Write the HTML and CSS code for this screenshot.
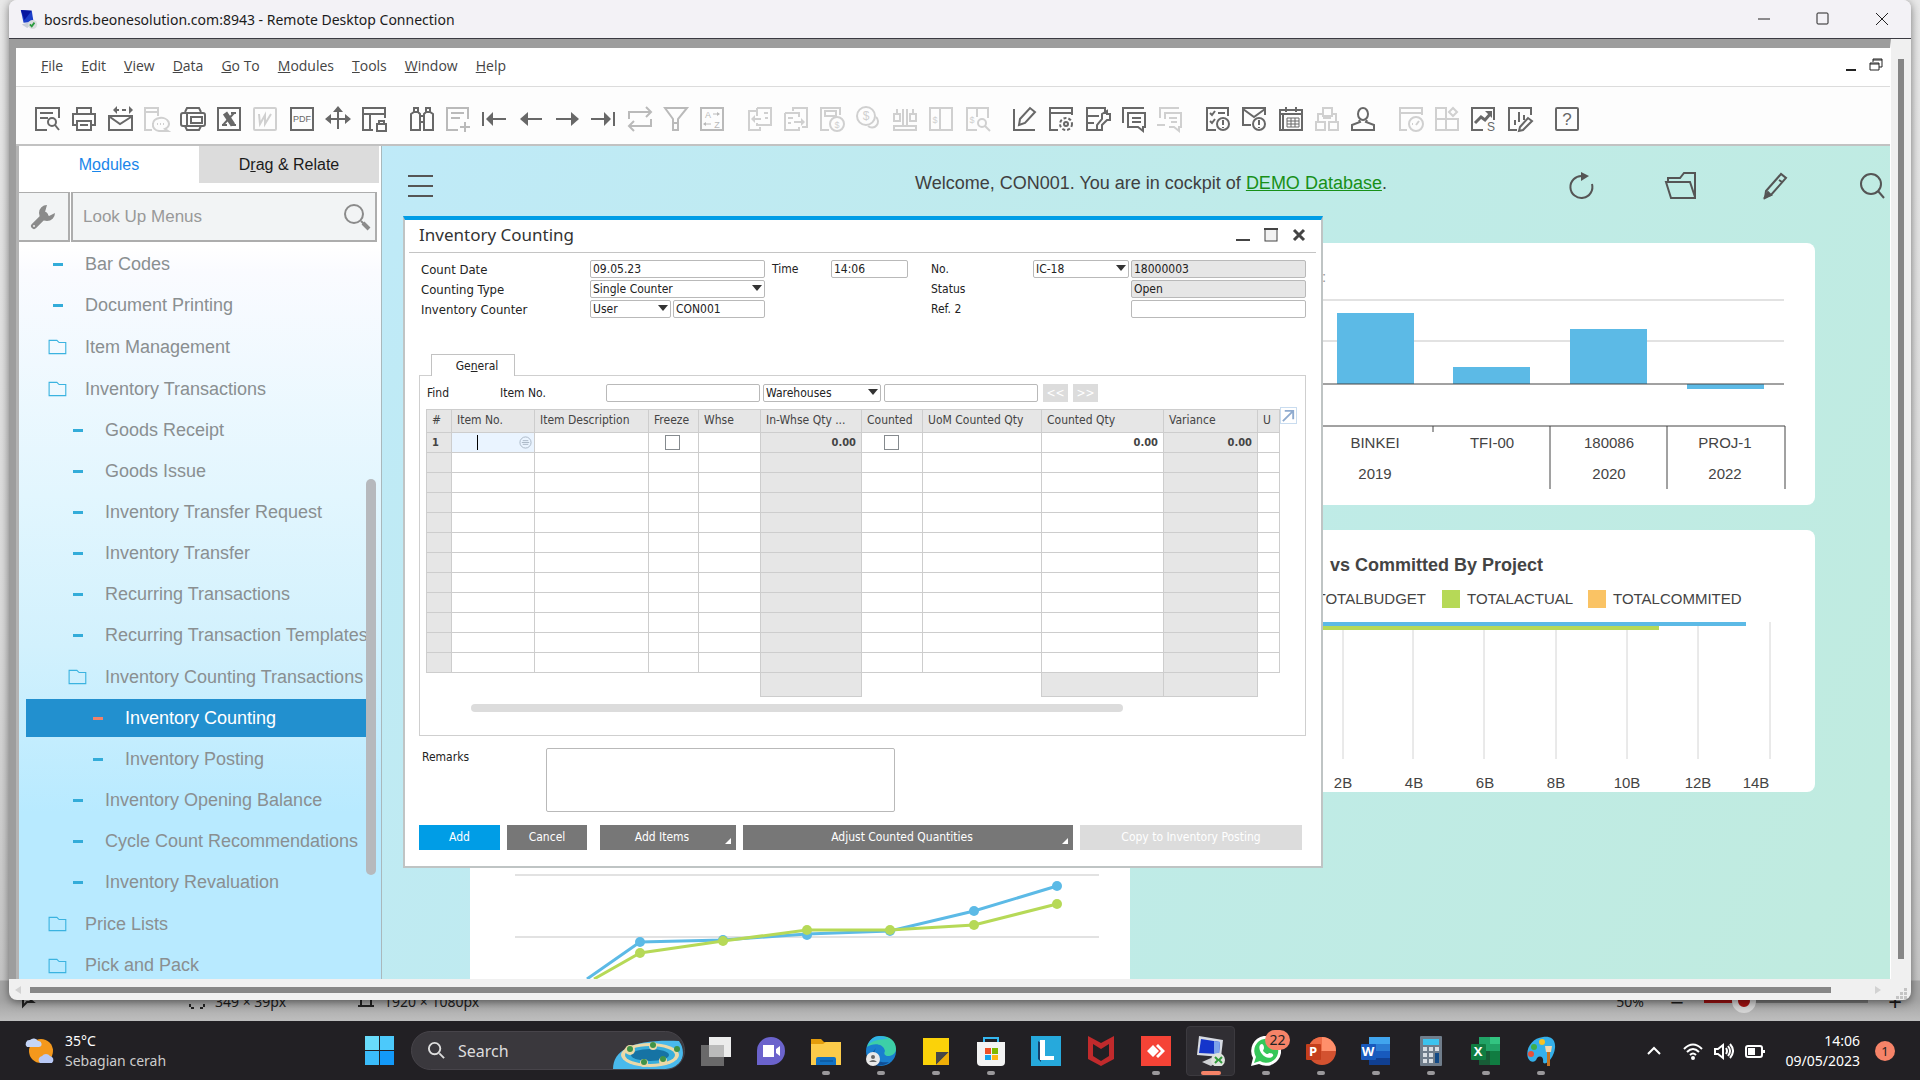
FILE: index.html
```html
<!DOCTYPE html>
<html lang="en">
<head>
  <meta charset="utf-8">
  <meta name="viewport" content="width=device-width, initial-scale=1">
  <title>Inventory Counting - Remote Desktop Connection</title>
  <link rel="stylesheet" href="styles.css">
</head>
<body>
  <!-- App behind the remote session -->
  <div class="paint">
    <footer class="paint-status">
      <svg class="st-icon st-pointer" viewBox="0 0 16 16"><path d="M3 1v12l4-4h6z"/></svg>
      <svg class="st-icon" viewBox="0 0 16 16"><path d="M1 5V1h4M11 1h4v4M15 11v4h-4M5 15H1v-4" stroke-dasharray="3 2"/></svg>
      <span class="st-selection">349 × 39px</span>
      <svg class="st-icon" viewBox="0 0 16 16"><path d="M3 0v13M0 13h16M13 0v13M0 3h16"/></svg>
      <span>1920 × 1080px</span>
      <span class="st-zoom">50%</span>
      <span class="st-sign">−</span>
      <input class="st-slider" type="range" min="0" max="100" value="20" aria-label="Zoom">
      <span class="st-sign">+</span>
    </footer>
  </div>

  <div class="rdp">
    <header class="titlebar">
      <svg class="app-icon" viewBox="0 0 20 22"><path d="M1 1l12 1 2 12-11 1z" fill="#1c3fc9"/><path d="M1 1l12 1-8 10z" fill="#0717a0"/><path d="M2 17l6-2 5 2-5 4z" fill="#c8ced8"/><circle cx="14" cy="17" r="5" fill="#d9dcdd"/><path d="M11 17l2 2 3-4" stroke="#2c9b3f" stroke-width="2" fill="none"/></svg>
      <span class="title-text">bosrds.beonesolution.com:8943 - Remote Desktop Connection</span>
      <div class="title-buttons">
        <button aria-label="Minimize"><svg viewBox="0 0 14 14"><path d="M1 7h12"/></svg></button>
        <button aria-label="Maximize"><svg viewBox="0 0 14 14"><rect x="1" y="1" width="11" height="11" rx="1"/></svg></button>
        <button aria-label="Close"><svg viewBox="0 0 14 14"><path d="M1 1l12 12M13 1L1 13"/></svg></button>
      </div>
    </header>

    <div class="rdp-body">
      <div class="rdp-view">
        <nav class="menubar">
          <button><u>F</u>ile</button>
          <button><u>E</u>dit</button>
          <button><u>V</u>iew</button>
          <button><u>D</u>ata</button>
          <button><u>G</u>o To</button>
          <button><u>M</u>odules</button>
          <button><u>T</u>ools</button>
          <button><u>W</u>indow</button>
          <button><u>H</u>elp</button>
          <div class="mdi-buttons">
            <svg viewBox="0 0 14 14"><path d="M2 12h10" stroke-width="2"/></svg>
            <svg viewBox="0 0 14 14"><path d="M4 4V1h9v8h-3M1 5h9v7H1zM1 6h9M4 2h9"/></svg>
          </div>
        </nav>

        <div class="toolbar">
          <div class="tool-group">
            <button aria-label="Preview"><svg viewBox="0 0 26 26"><path d="M25 12V2H2v22h11M6 7h13M6 12h8"/><circle cx="18" cy="16" r="4"/><path d="M21 19l4 5"/></svg></button>
            <button aria-label="Print"><svg viewBox="0 0 26 26"><path d="M6 8V2h14v6M6 19H2V8h22v11h-4M6 15h14v9H6zM9 19h8"/></svg></button>
            <button aria-label="Send message"><svg viewBox="0 0 26 26"><rect x="2" y="10" width="23" height="14"/><path d="M3 11l10 7 11-7M8 4h4M15 4h4"/><path class="solid" d="M6 4l4-4v8zM26 4l-4-4v8z"/></svg></button>
            <button aria-label="Send SMS" disabled><svg viewBox="0 0 26 26"><path d="M9 24H2V2h13v8M2 6h13"/><path d="M10 18a8 6 0 1 1 12 5l3 2h-9a7 6 0 0 1-6-7M14 18h1M17 18h1M20 18h1"/></svg></button>
            <button aria-label="Fax"><svg viewBox="0 0 26 26"><path d="M5 6l2-4h12l2 4M5 20l2 4h12l2-4"/><rect x="1" y="7" width="24" height="13" rx="2"/><path d="M7 7v13M11 11h11v6H11z"/></svg></button>
            <button aria-label="Export to Excel"><svg viewBox="0 0 26 26"><rect x="2" y="2" width="22" height="22"/><path d="M9 7l8 12" stroke-width="5"/><path d="M18 7L7 19" stroke-width="2"/><path d="M6 19h5M15 7h5M15 19h5"/></svg></button>
            <button aria-label="Export to Word" disabled><svg viewBox="0 0 26 26"><rect x="2" y="2" width="22" height="22" rx="1"/><path d="M7 8l1 10 5-9v9l6-10" stroke-width="2"/></svg></button>
            <button aria-label="Export to PDF"><svg viewBox="0 0 26 26"><rect x="2" y="2" width="22" height="22"/><text x="13" y="16">PDF</text></svg></button>
            <button aria-label="Launch application"><svg viewBox="0 0 26 26"><path d="M13 3v20M3 13h20"/><path class="solid" d="M13 0l5 6H8zM0 13l6-5v10zM26 13l-6-5v10z"/></svg></button>
            <button aria-label="Lock screen"><svg viewBox="0 0 26 26"><path d="M24 12V2H2v22h10M2 8h22M9 8v16"/><rect x="16" y="18" width="9" height="7"/><path d="M18 18v-3h5v3"/></svg></button>
          </div>
          <div class="tool-group">
            <button aria-label="Find"><svg viewBox="0 0 26 26"><path d="M2 8l3-2h4l2 2v16H2zM15 8l2-2h4l3 2v16h-9zM5 6V2h4v4M17 6V2h4v4M11 10h4M11 16h4"/></svg></button>
            <button aria-label="Add" class="mid"><svg viewBox="0 0 26 26"><path d="M23 13V2H2v22h11M6 7h13M6 12h9M20 16v10M15 21h10"/></svg></button>
            <button aria-label="First record"><svg viewBox="0 0 26 26"><path d="M2 6v14M7 13h18"/><path class="solid" d="M5 13l7-7v14z"/></svg></button>
            <button aria-label="Previous record"><svg viewBox="0 0 26 26"><path d="M5 13h19"/><path class="solid" d="M2 13l8-7v14z"/></svg></button>
            <button aria-label="Next record"><svg viewBox="0 0 26 26"><path d="M2 13h19"/><path class="solid" d="M25 13l-8-7v14z"/></svg></button>
            <button aria-label="Last record"><svg viewBox="0 0 26 26"><path d="M24 6v14M1 13h18"/><path class="solid" d="M21 13l-7-7v14z"/></svg></button>
            <button aria-label="Refresh record" class="mid"><svg viewBox="0 0 26 26"><path d="M2 13V6h22M19 1l5 5-5 5M24 13v7H2M7 15l-5 5 5 5"/></svg></button>
            <button aria-label="Filter" class="mid"><svg viewBox="0 0 26 26"><path d="M2 2h22l-9 11v11h-5V13zM10 17h5"/></svg></button>
            <button aria-label="Sort" class="mid"><svg viewBox="0 0 26 26"><rect x="2" y="2" width="22" height="22"/><text x="9" y="12">A</text><text x="18" y="22">Z</text><path d="M14 8h6M12 18H5" stroke-width="1"/><path class="solid" d="M21 8l-3-2v4zM4 18l3-2v4z"/></svg></button>
          </div>
          <div class="tool-group">
            <button aria-label="Base document" disabled><svg viewBox="0 0 26 26"><path d="M9 5H2v19h11v-3M10 2h14v17H10v-2M10 10V2M5 13h9M17 7h4M18 12h3"/><path class="solid" d="M4 13l4-4v8z"/></svg></button>
            <button aria-label="Target document" disabled><svg viewBox="0 0 26 26"><path d="M10 5V2h14v19h-5M2 7h14v4M2 7v17h14v-3M5 12h5M5 17h3M11 16h9"/><path class="solid" d="M22 16l-4-4v8z"/></svg></button>
            <button aria-label="Gross profit" disabled><svg viewBox="0 0 26 26"><path d="M21 9V2H2v22h8M6 5h11v5H6z"/><circle cx="18" cy="18" r="7"/><text x="18" y="22">$</text></svg></button>
            <button aria-label="Payment means" disabled><svg viewBox="0 0 26 26"><circle cx="10" cy="10" r="9"/><path d="M20 11a6 6 0 1 1-8 9"/><text x="10" y="14" class="big">$</text></svg></button>
            <button aria-label="Volume and weight" disabled><svg viewBox="0 0 26 26"><path d="M11 3v17M15 3v17M5 3v5M21 3v5M2 8h6v7H2zM18 8h6v7h-6zM2 20h22v4H2z"/></svg></button>
            <button aria-label="Transaction journal" disabled><svg viewBox="0 0 26 26"><rect x="2" y="2" width="22" height="22"/><path d="M12 2v22"/><text x="7" y="17">$</text></svg></button>
            <button aria-label="Journal preview" disabled><svg viewBox="0 0 26 26"><path d="M23 12V2H2v22h10M12 2v9"/><text x="7" y="17">$</text><circle cx="17" cy="17" r="4"/><path d="M20 20l5 5"/></svg></button>
          </div>
          <div class="tool-group">
            <button aria-label="Layout designer"><svg viewBox="0 0 26 26"><path d="M2 3v21h21"/><path d="M8 13l10-11 5 4-10 11-6 2z" stroke-width="2"/></svg></button>
            <button aria-label="Form settings"><svg viewBox="0 0 26 26"><path d="M24 9V2H2v22h8M2 7h22"/><circle cx="18" cy="18" r="2"/><circle cx="18" cy="18" r="6" stroke-dasharray="3 2"/></svg></button>
            <button aria-label="Query manager"><svg viewBox="0 0 26 26"><path d="M20 8V2H2v22h9M2 10h12M2 17h7"/><path d="M25 8h-3V5l-5 3v5l-5 6v5h5v-5l5-5h3z" stroke-width="2"/></svg></button>
            <button aria-label="Messages"><svg viewBox="0 0 26 26"><path d="M2 17V2h21"/><path d="M7 7h17v14h-2v4l-5-4H7zM11 12h9M11 16h9"/></svg></button>
            <button aria-label="Forward" disabled><svg viewBox="0 0 26 26"><path d="M3 12V2h19M8 13V7h16v14h-2v4l-5-4h-5M12 12h8M14 16h6M0 19h8"/></svg></button>
          </div>
          <div class="tool-group">
            <button aria-label="My activities"><svg viewBox="0 0 26 26"><path d="M23 10V2H2v22h9M5 7l2 2 3-4M5 15l2 2 3-4M13 7h7"/><circle cx="18" cy="18" r="6"/><path d="M18 14v5M18 21v1"/></svg></button>
            <button aria-label="Alerts"><svg viewBox="0 0 26 26"><path d="M24 9V2H2v17h8M2 3l11 8 11-8"/><circle cx="18" cy="18" r="6"/><path d="M18 14v5M18 21v1"/></svg></button>
            <button aria-label="Calendar"><svg viewBox="0 0 26 26"><path d="M2 4h22v20H2zM2 8h22M8 1v5M18 1v5M5 8v16"/><path d="M9 12h12v9H9zM9 15h12M9 18h12M13 12v9M17 12v9" stroke-width="1"/></svg></button>
            <button aria-label="Organization" disabled><svg viewBox="0 0 26 26"><path d="M9 2h9v8H9zM2 16h9v8H2zM15 16h9v8h-9zM4 15V8h4M22 15V8h-3M9 12h8"/></svg></button>
            <button aria-label="Customer"><svg viewBox="0 0 26 26"><ellipse cx="13" cy="8" rx="5" ry="6"/><path d="M9 14l1 2-8 3v5h22v-5l-8-3 1-2"/></svg></button>
          </div>
          <div class="tool-group">
            <button aria-label="Dashboard" disabled><svg viewBox="0 0 26 26"><path d="M24 9V2H2v22h7M2 7h22"/><circle cx="18" cy="18" r="7"/><path d="M18 19l3-4M14 18h1"/></svg></button>
            <button aria-label="Widgets" disabled><svg viewBox="0 0 26 26"><path d="M2 2h10v22H2zM2 13h22v11H12M19 2l4 4-4 4-4-4z"/></svg></button>
            <button aria-label="Sales analysis"><svg viewBox="0 0 26 26"><path d="M24 14V2H2v22h11"/><path d="M5 17l6-6 4 3 6-7" stroke-width="3"/><path class="solid" d="M15 5h7v7z"/><text x="21" y="25" class="big">S</text></svg></button>
            <button aria-label="Edit report"><svg viewBox="0 0 26 26"><path d="M24 9V2H2v22h8M8 14v5M12 6v10M17 9v5"/><path d="M13 21l8-9 4 3-9 9-4 1z" stroke-width="2"/></svg></button>
          </div>
          <div class="tool-group">
            <button aria-label="Help"><svg viewBox="0 0 26 26"><rect x="2" y="2" width="22" height="22" rx="1"/><text x="13" y="19" class="help">?</text></svg></button>
          </div>
        </div>

        <div class="workspace">
          <aside class="sidebar">
            <div class="side-tabs">
              <button class="side-tab active">M<u>o</u>dules</button>
              <button class="side-tab">D<u>r</u>ag &amp; Relate</button>
            </div>
            <div class="lookup">
              <button class="wrench" aria-label="Settings"><svg viewBox="0 0 26 26"><path d="M4 22L15 11" stroke="#8b8b8b" stroke-width="6" stroke-linecap="round"/><path d="M17 1a8 8 0 1 0 8 8l-6 3-4-4z" fill="#8b8b8b"/><circle cx="4" cy="22" r="1" fill="#eee"/></svg></button>
              <div class="lookup-box">
                <input type="text" placeholder="Look Up Menus" aria-label="Look up menus">
                <svg viewBox="0 0 28 28"><circle cx="11" cy="11" r="9" stroke-width="2"/><path d="M18 18l3 3" stroke-width="2"/><path d="M20 20l6 6" stroke-width="4"/></svg>
              </div>
            </div>
            <div class="tree-wrap">
              <ul class="tree">
                <li><a href="#"><i class="dash"></i>Bar Codes</a></li>
                <li><a href="#"><i class="dash"></i>Document Printing</a></li>
                <li class="folder"><a href="#"><svg viewBox="0 0 18 14"><path d="M1 1h7l2 2h6v10H1z"/></svg>Item Management</a></li>
                <li class="folder"><a href="#"><svg viewBox="0 0 18 14"><path d="M1 1h7l2 2h6v10H1z"/></svg>Inventory Transactions</a></li>
                <li class="lvl2"><a href="#"><i class="dash"></i>Goods Receipt</a></li>
                <li class="lvl2"><a href="#"><i class="dash"></i>Goods Issue</a></li>
                <li class="lvl2"><a href="#"><i class="dash"></i>Inventory Transfer Request</a></li>
                <li class="lvl2"><a href="#"><i class="dash"></i>Inventory Transfer</a></li>
                <li class="lvl2"><a href="#"><i class="dash"></i>Recurring Transactions</a></li>
                <li class="lvl2"><a href="#"><i class="dash"></i>Recurring Transaction Templates</a></li>
                <li class="lvl2 folder"><a href="#"><svg viewBox="0 0 18 14"><path d="M1 1h7l2 2h6v10H1z"/></svg>Inventory Counting Transactions</a></li>
                <li class="lvl3 selected"><a href="#"><i class="dash"></i>Inventory Counting</a></li>
                <li class="lvl3"><a href="#"><i class="dash"></i>Inventory Posting</a></li>
                <li class="lvl2"><a href="#"><i class="dash"></i>Inventory Opening Balance</a></li>
                <li class="lvl2"><a href="#"><i class="dash"></i>Cycle Count Recommendations</a></li>
                <li class="lvl2"><a href="#"><i class="dash"></i>Inventory Revaluation</a></li>
                <li class="folder"><a href="#"><svg viewBox="0 0 18 14"><path d="M1 1h7l2 2h6v10H1z"/></svg>Price Lists</a></li>
                <li><a href="#"><svg viewBox="0 0 18 14"><path d="M1 1h7l2 2h6v10H1z"/></svg>Pick and Pack</a></li>
              </ul>
              <div class="tree-scroll"><div class="tree-thumb"></div></div>
            </div>
          </aside>

          <main class="cockpit">
            <header class="cockpit-head">
              <button aria-label="Menu"><svg viewBox="0 0 28 28"><path d="M0 4h25M0 14h25M0 24h25"/></svg></button>
              <p>Welcome, CON001. You are in cockpit of <a href="#">DEMO Database</a>.</p>
              <div class="cockpit-actions">
                <button aria-label="Refresh"><svg viewBox="0 0 28 28"><path d="M12 4a11 11 0 1 0 10 8"/><path d="M11 0l8 4-8 5z" fill="#555" stroke="none"/></svg></button>
                <button aria-label="Open"><svg viewBox="0 0 28 28"><path d="M2 9V6h12l4-5h11v25H5L0 10h24l5 15"/></svg></button>
                <button aria-label="Edit"><svg viewBox="0 0 28 28"><path d="M4 19L19 2l5 4L9 23l-6 3z"/><path d="M17 8l3 2M3 25l3-5 3 3z" fill="#555"/></svg></button>
                <button aria-label="Search"><svg viewBox="0 0 28 28"><circle cx="13" cy="12" r="10"/><path d="M20 19l6 7"/></svg></button>
              </div>
            </header>

            <div class="cards">
              <section class="card card-empty"></section>
              <section class="card">
                <svg class="chart" viewBox="0 0 660 262">
                  <text x="167" y="39" class="faint">:</text>
                  <path class="grid" d="M30 57h599M30 98h599"/>
                  <g class="bars">
                    <rect x="182" y="70" width="77" height="71"/>
                    <rect x="298" y="124" width="77" height="17"/>
                    <rect x="415" y="86" width="77" height="55"/>
                    <rect x="532" y="141" width="77" height="5"/>
                  </g>
                  <path class="axis" d="M30 141h599"/>
                  <path class="axis" d="M30 183h600v63M278 183v6M395 183v63M512 183v63"/>
                  <g class="mid-text">
                    <text x="220" y="205">BINKEI</text><text x="337" y="205">TFI-00</text>
                    <text x="454" y="205">180086</text><text x="570" y="205">PROJ-1</text>
                    <text x="220" y="236">2019</text><text x="454" y="236">2020</text><text x="570" y="236">2022</text>
                  </g>
                </svg>
              </section>
              <section class="card card-line">
                <svg class="chart" viewBox="0 0 660 449">
                  <path class="grid" d="M45 345h584M45 407h584"/>
                  <g class="line-a">
                    <path d="M117 449l53-37 83-2 84-6 83-3 84-20 83-25" />
                    <circle cx="170" cy="412" r="5"/><circle cx="253" cy="410" r="5"/><circle cx="337" cy="405" r="5"/><circle cx="420" cy="401" r="5"/><circle cx="504" cy="381" r="5"/><circle cx="587" cy="356" r="5"/>
                  </g>
                  <g class="line-b">
                    <path d="M124 449l46-26 83-12 84-11h83l84-5 83-21" />
                    <circle cx="170" cy="423" r="5"/><circle cx="253" cy="411" r="5"/><circle cx="337" cy="400" r="5"/><circle cx="420" cy="400" r="5"/><circle cx="504" cy="395" r="5"/><circle cx="587" cy="374" r="5"/>
                  </g>
                </svg>
              </section>
              <section class="card">
                <svg class="chart" viewBox="0 0 660 262">
                  <text x="388" y="41" class="chart-title">vs Committed By Project</text>
                  <text x="271" y="74" class="end-text">TOTALBUDGET</text>
                  <rect x="287" y="60" width="18" height="18" fill="#b6d957"/>
                  <text x="312" y="74">TOTALACTUAL</text>
                  <rect x="433" y="60" width="18" height="18" fill="#fac364"/>
                  <text x="458" y="74">TOTALCOMMITED</text>
                  <path class="grid thin" d="M188 92v137M258 92v137M329 92v137M401 92v137M472 92v137M543 92v137M615 92v137"/>
                  <path d="M60 94h531" stroke="#5cbae6" stroke-width="4"/>
                  <path d="M60 98h444" stroke="#b6d957" stroke-width="4"/>
                  <g class="mid-text">
                    <text x="188" y="258">2B</text><text x="259" y="258">4B</text><text x="330" y="258">6B</text><text x="401" y="258">8B</text>
                    <text x="472" y="258">10B</text><text x="543" y="258">12B</text><text x="601" y="258">14B</text>
                  </g>
                </svg>
              </section>
            </div>
          </main>

          <!-- Floating document window -->
          <section class="dialog">
            <header class="dialog-head">
              <h2>Inventory Counting</h2>
              <button aria-label="Minimize"><svg viewBox="0 0 14 14"><path d="M0 12h14" stroke-width="2"/></svg></button>
              <button aria-label="Maximize"><svg viewBox="0 0 14 14"><rect x="1" y="1" width="12" height="12" fill="#f2f2f2" stroke-width="1"/><path d="M0 1h14" stroke-width="2"/></svg></button>
              <button aria-label="Close"><svg viewBox="0 0 14 14"><path d="M2 2l10 10M12 2L2 12" stroke-width="3"/></svg></button>
            </header>

            <form class="dialog-form">
              <div class="fields">
                <div class="row">
                  <label class="lbl-main" for="count-date">Count Date</label>
                  <input id="count-date" class="w-long" value="09.05.23">
                  <label class="lbl-time" for="count-time">Time</label>
                  <input id="count-time" class="w-time" value="14:06">
                </div>
                <div class="row">
                  <label class="lbl-main" for="counting-type">Counting Type</label>
                  <span class="drop w-long"><select id="counting-type"><option>Single Counter</option></select></span>
                </div>
                <div class="row">
                  <label class="lbl-main" for="counter-type">Inventory Counter</label>
                  <span class="drop w-user"><select id="counter-type"><option>User</option></select></span>
                  <input class="w-code" value="CON001" aria-label="Counter">
                </div>
              </div>
              <div class="fields">
                <div class="row">
                  <label class="lbl-doc" for="series">No.</label>
                  <span class="drop w-series"><select id="series"><option>IC-18</option></select></span>
                  <input class="w-long" value="18000003" aria-label="Document number" readonly>
                </div>
                <div class="row">
                  <label class="lbl-wide" for="status">Status</label>
                  <input id="status" class="w-long" value="Open" readonly>
                </div>
                <div class="row">
                  <label class="lbl-wide" for="ref2">Ref. 2</label>
                  <input id="ref2" class="w-long">
                </div>
              </div>
            </form>

            <button class="doc-tab">Ge<u>n</u>eral</button>
            <div class="doc-panel">
              <div class="find-row">
                <span class="find-lbl">Find</span>
                <label class="find-item" for="find-item">Item No.</label>
                <input id="find-item" class="w-find">
                <span class="drop w-whse"><select aria-label="Filter by"><option>Warehouses</option></select></span>
                <input class="w-find" aria-label="Warehouse">
                <button type="button" class="nav-btn" disabled>&lt;&lt;</button>
                <button type="button" class="nav-btn" disabled>&gt;&gt;</button>
              </div>
              <div class="grid-wrap">
                <table class="grid-table">
                  <colgroup>
                    <col class="c-num"><col class="c-item"><col class="c-desc"><col class="c-freeze"><col class="c-whse"><col class="c-inqty"><col class="c-counted"><col class="c-uom"><col class="c-cqty"><col class="c-var"><col class="c-u">
                  </colgroup>
                  <thead>
                    <tr><th>#</th><th>Item No.</th><th>Item Description</th><th>Freeze</th><th>Whse</th><th>In-Whse Qty ...</th><th>Counted</th><th>UoM Counted Qty</th><th>Counted Qty</th><th>Variance</th><th>U</th></tr>
                  </thead>
                  <tbody>
                    <tr>
                      <td><b>1</b></td>
                      <td class="editing"><div class="edit-cell"><span class="caret"></span><svg viewBox="0 0 14 14"><circle cx="7" cy="7" r="6"/><path d="M4 5h6M3 7h8M4 9h6"/></svg></div></td>
                      <td></td>
                      <td class="check"><input type="checkbox" aria-label="Freeze"></td>
                      <td></td><td class="num">0.00</td>
                      <td class="check"><input type="checkbox" aria-label="Counted"></td>
                      <td></td><td class="num">0.00</td><td class="num">0.00</td><td></td>
                    </tr>
                    <tr><td></td><td></td><td></td><td></td><td></td><td></td><td></td><td></td><td></td><td></td><td></td></tr>
                    <tr><td></td><td></td><td></td><td></td><td></td><td></td><td></td><td></td><td></td><td></td><td></td></tr>
                    <tr><td></td><td></td><td></td><td></td><td></td><td></td><td></td><td></td><td></td><td></td><td></td></tr>
                    <tr><td></td><td></td><td></td><td></td><td></td><td></td><td></td><td></td><td></td><td></td><td></td></tr>
                    <tr><td></td><td></td><td></td><td></td><td></td><td></td><td></td><td></td><td></td><td></td><td></td></tr>
                    <tr><td></td><td></td><td></td><td></td><td></td><td></td><td></td><td></td><td></td><td></td><td></td></tr>
                    <tr><td></td><td></td><td></td><td></td><td></td><td></td><td></td><td></td><td></td><td></td><td></td></tr>
                    <tr><td></td><td></td><td></td><td></td><td></td><td></td><td></td><td></td><td></td><td></td><td></td></tr>
                    <tr><td></td><td></td><td></td><td></td><td></td><td></td><td></td><td></td><td></td><td></td><td></td></tr>
                    <tr><td></td><td></td><td></td><td></td><td></td><td></td><td></td><td></td><td></td><td></td><td></td></tr>
                    <tr><td></td><td></td><td></td><td></td><td></td><td></td><td></td><td></td><td></td><td></td><td></td></tr>
                  </tbody>
                  <tfoot>
                    <tr><td colspan="5"></td><td class="total"></td><td colspan="2"></td><td class="total"></td><td class="total"></td><td></td></tr>
                  </tfoot>
                </table>
                <button type="button" class="expand" aria-label="Expand"><svg viewBox="0 0 16 16"><path d="M2 14L13 3M4 3h9v9" /></svg></button>
              </div>
              <div class="grid-scroll"></div>
            </div>

            <div class="remarks">
              <label for="remarks">Remarks</label>
              <textarea id="remarks"></textarea>
            </div>

            <div class="dialog-buttons">
              <button class="primary">Add</button>
              <button class="cancel">Cancel</button>
              <button class="add-items more">Add Items</button>
              <button class="adjust more">Adjust Counted Quantities</button>
              <button class="copy" disabled>Copy to Inventory Posting</button>
            </div>
          </section>
        </div>
      </div>
      <div class="vscroll"><div class="vthumb"></div></div>
    </div>
    <div class="hscroll">
      <span class="arrow-left"></span>
      <div class="hthumb"></div>
      <span class="arrow-right"></span>
      <svg class="grip" viewBox="0 0 12 12"><path d="M8 0h3v3H8zM4 4h3v3H4zM8 4h3v3H8zM0 8h3v3H0zM4 8h3v3H4zM8 8h3v3H8z"/></svg>
    </div>
  </div>

  <footer class="taskbar">
    <button class="weather">
      <svg viewBox="0 0 32 32"><circle cx="17" cy="16" r="12" fill="#f4981c"/><path d="M3 12a4 4 0 0 1 3-7 5 5 0 0 1 8 1 3 3 0 0 1 1 6z" fill="#c5d6f8"/><path d="M16 28a4 4 0 0 1 2-7 5 5 0 0 1 8 0 4 4 0 0 1 2 7z" fill="#b9c9f5"/></svg>
      <span class="weather-text"><span class="temp">35°C</span><span>Sebagian cerah</span></span>
    </button>
    <button class="start" aria-label="Start"><svg viewBox="0 0 30 30"><path d="M0 0h14v14H0z" fill="#69dcfb"/><path d="M15 0h14v14H15z" fill="#4cc9fb"/><path d="M0 15h14v14H0z" fill="#3bbcfa"/><path d="M15 15h14v14H15z" fill="#1399f8"/></svg></button>
    <div class="search">
      <svg class="glass" viewBox="0 0 20 20"><circle cx="8" cy="8" r="6"/><path d="M13 13l5 5"/></svg>
      <input type="text" placeholder="Search" aria-label="Search">
      <svg class="island" viewBox="0 0 71 30"><path d="M0 30C0 10 22 0 66 2c6 8 6 22-6 28z" fill="#49b9ec"/><ellipse cx="37" cy="16" rx="29" ry="12" fill="#ecd9a8"/><ellipse cx="37" cy="16" rx="25" ry="9" fill="#38aedc"/><ellipse cx="37" cy="16" rx="19" ry="6" fill="#1673a4"/><g fill="#ecd9a8"><circle cx="17" cy="11" r="5"/><circle cx="40" cy="7" r="4"/><circle cx="50" cy="22" r="4"/><circle cx="31" cy="24" r="4"/></g><g fill="#3f9347"><circle cx="17" cy="10" r="3"/><circle cx="40" cy="6" r="3"/><circle cx="64" cy="10" r="3"/><circle cx="50" cy="20" r="3"/><circle cx="31" cy="23" r="3"/></g></svg>
    </div>
    <div class="apps">
      <button aria-label="Task view"><svg viewBox="0 0 30 30"><path d="M8 1h22v20H8z" fill="#ececec"/><path d="M0 9h23v21H0z" fill="#777" opacity=".85"/><path d="M8 9h15v12H8z" fill="#bbb"/></svg></button>
      <button aria-label="Chat"><svg viewBox="0 0 30 30"><path d="M1 29V15a14 14 0 1 1 14 14z" fill="#6b63cc"/><path d="M7 9h11v12H7zM20 13l4-3v10l-4-3z" fill="#fff"/></svg></button>
      <button aria-label="File Explorer" class="open"><svg viewBox="0 0 30 30"><path d="M0 3h10l3 3h17v23H0z" fill="#e39c0c"/><path d="M0 8h12l3-2h15v23H0z" fill="#fccb4a"/><path d="M5 29v-6q0-2 2-2h16q2 0 2 2v6z" fill="#1272c4"/><path d="M9 25h13" stroke="#0a4d8c" stroke-width="1"/></svg></button>
      <button aria-label="Edge" class="open"><svg viewBox="0 0 30 30"><circle cx="15" cy="15" r="15" fill="#1a7fcf"/><path d="M1 11C5-4 30-3 30 13c0 9-15 9-11 2-2-8-12-8-18-4z" fill="#3dcfa7"/><path d="M2 9C5-1 15-2 22 3 14 3 5 5 2 9z" fill="#31b4e4"/><path d="M10 12c-5 8 1 16 13 14-5 5-19 6-20-5z" fill="#0f4f96"/><circle cx="7" cy="23" r="7" fill="#e9e9e9"/><circle cx="7" cy="21" r="2" fill="#666"/><path d="M3 26q4-4 8 0z" fill="#666"/></svg></button>
      <button aria-label="Sticky Notes" class="open"><svg viewBox="0 0 30 30"><path d="M2 2h26v17L19 29H2z" fill="#fbd209"/><path d="M15 16h13L15 29z" fill="#474747"/><path d="M28 16v13H15z" fill="#efae07"/></svg></button>
      <button aria-label="Microsoft Store" class="open"><svg viewBox="0 0 30 30"><path d="M8 7V2h14v5" fill="none" stroke="#35b7f0" stroke-width="2"/><path d="M1 6h28v20q0 4-4 4H5q-4 0-4-4z" fill="#f3f3f3"/><path d="M9 12h6v6H9z" fill="#ef5025"/><path d="M16 12h6v6h-6z" fill="#7db900"/><path d="M9 19h6v5H9z" fill="#14a4ec"/><path d="M16 19h6v5h-6z" fill="#fdb813"/></svg></button>
      <button aria-label="Lenovo"><svg viewBox="0 0 30 30"><path d="M0 0h30v30H0z" fill="#26a9dc"/><path d="M7 5v18l3 3V7z" fill="#16406b"/><path d="M9 4h5v16h9v4H9z" fill="#fff"/></svg></button>
      <button aria-label="McAfee"><svg viewBox="0 0 30 30"><path d="M2 0l13 7 13-7v23l-13 7-13-7zM7 8v12l8 5 8-5V8l-8 5z" fill="#c12a2c" fill-rule="evenodd"/></svg></button>
      <button aria-label="AnyDesk" class="open"><svg viewBox="0 0 30 30"><path d="M0 0h30v30H0z" fill="#f54336"/><path d="M6 15l6-6 6 6-6 6zM15 10l2-2 7 7-7 7-2-2 5-5z" fill="#fff"/></svg></button>
      <button aria-label="Remote Desktop" class="open current"><svg viewBox="0 0 30 30"><path d="M3 0l24 4-2 17-24-2z" fill="#d7dbe3"/><path d="M5 3l19 3-1 12L3 17z" fill="#1535cb"/><path d="M18 5l6 1-1 12h-5z" fill="#7ea3ea"/><path d="M6 26l9-4 6 4-6 4z" fill="#cfd1d4"/><circle cx="22" cy="24" r="7" fill="#dde2dc"/><path d="M19 21l3 3-3 3M26 21l-3 3 3 3" fill="none" stroke="#329b3c" stroke-width="2"/></svg></button>
      <button aria-label="WhatsApp" class="open"><svg viewBox="0 0 30 30"><path d="M0 30l2-8A15 15 0 1 1 8 28z" fill="#fff"/><path d="M3 27l2-6a12 12 0 1 1 4 4z" fill="#35c759"/><path d="M9 9c3-3 4 1 4 3s-2 2 0 4 4 3 5 1c3 0 6 2 3 4-7 4-15-7-12-12z" fill="#fff"/></svg><span class="badge">22</span></button>
      <button aria-label="PowerPoint" class="open"><svg viewBox="0 0 30 30"><circle cx="16" cy="15" r="14" fill="#d35230"/><path d="M16 1a14 14 0 0 1 14 14H16z" fill="#ff8f6b"/><path d="M16 1A14 14 0 0 0 2 15h14z" fill="#ed6c47"/><rect y="8" width="15" height="16" rx="1" fill="#c43e1c"/><text x="7" y="20">P</text></svg></button>
      <button aria-label="Word" class="open"><svg viewBox="0 0 30 30"><path d="M8 1h21v7H8z" fill="#41a5ee"/><path d="M8 8h21v7H8z" fill="#2b7cd3"/><path d="M8 15h21v7H8z" fill="#185abd"/><path d="M8 22h21v7H8z" fill="#103f91"/><rect y="8" width="15" height="16" rx="1" fill="#185abd"/><text x="7" y="20">W</text></svg></button>
      <button aria-label="Calculator" class="open"><svg viewBox="0 0 30 30"><rect x="4" width="22" height="30" rx="1" fill="#707d8b"/><path d="M7 3h16v6H7z" fill="#3cc3ee"/><path d="M7 11h4v4H7zM13 11h4v4h-4zM19 11h4v4h-4zM7 17h4v4H7zM13 17h4v4h-4zM7 23h4v4H7zM13 23h4v4h-4z" fill="#d8dde3"/><path d="M19 17h4v10h-4z" fill="#134a86"/></svg></button>
      <button aria-label="Excel" class="open"><svg viewBox="0 0 30 30"><path d="M8 1h11v14H8z" fill="#21a366"/><path d="M19 1h10v7H19z" fill="#33c481"/><path d="M19 8h10v7H19z" fill="#21a366"/><path d="M8 15h11v14H8z" fill="#185c37"/><path d="M19 15h10v14H19z" fill="#107c41"/><rect y="8" width="15" height="16" rx="1" fill="#107c41"/><text x="7" y="20">X</text></svg></button>
      <button aria-label="Paint" class="open"><svg viewBox="0 0 30 30"><path d="M17 1C6 2-1 13 2 22c3 6 8 4 9 0 3-3 7-1 6 4 2 5 11-4 12-14S23 0 17 1z" fill="#35b0ea"/><circle cx="8" cy="11" r="3" fill="#3fae49"/><circle cx="16" cy="6" r="3" fill="#f7c325"/><circle cx="5" cy="18" r="3" fill="#e8503a"/><path d="M21 15h3v15h-3z" fill="#c47422"/><path d="M19 10h7l-1 6h-5z" fill="#f2d8b0"/></svg></button>
    </div>
    <div class="tray">
      <svg viewBox="0 0 20 20"><path d="M4 13l6-6 6 6"/></svg>
      <svg viewBox="0 0 20 20"><path d="M1 8q9-9 18 0M4 11q6-6 12 0M7 14q3-3 6 0"/><circle cx="10" cy="17" r="1"/></svg>
      <svg viewBox="0 0 20 20"><path d="M1 8v5h3l5 4V4L4 8zM12 7q2 3 0 6M14 5q4 5 0 10M16 3q6 7 0 14"/></svg>
      <svg viewBox="0 0 20 20"><rect x="1" y="5" width="16" height="11" rx="2"/><path d="M19 9v3"/><path d="M4 8h5v5H4z" fill="#fff"/></svg>
    </div>
    <div class="clock"><span>14:06</span><span>09/05/2023</span></div>
    <span class="notify">1</span>
  </footer>
</body>
</html>
```
FILE: styles.css
```css
* {
  box-sizing: border-box;
}

body {
  margin: 0;
  height: 100vh;
  display: flex;
  flex-direction: column;
  overflow: hidden;
  font-family: "Noto Sans", "Open Sans", sans-serif;
  font-size: 14px;
  color: #1b1b1b;
}

button {
  font: inherit;
  color: inherit;
  background: none;
  border: none;
  padding: 0;
}

svg {
  display: block;
  fill: none;
}

/* App behind the session */
.paint {
  flex: 1;
  display: flex;
  flex-direction: column;
  justify-content: flex-end;
  background: linear-gradient(#e9e9e9, #dcdcdc 60%, #c4c4c4);
}

.paint-status {
  height: 41px;
  display: flex;
  align-items: center;
  gap: 10px;
  padding: 0 16px 0 20px;
  border-top: 1px solid #b5b5b5;
  background: linear-gradient(#a5a5a5 50%, #bebebe);
}

.st-icon {
  width: 16px;
  height: 16px;
  stroke: #222;
  stroke-width: 2;
}

.st-pointer {
  margin-right: 143px;
}

.st-selection {
  margin-right: 62px;
}

.st-zoom {
  margin-left: auto;
}

.st-sign {
  width: 18px;
  font-size: 24px;
  text-align: center;
}

.st-zoom + .st-sign {
  margin-left: 14px;
}

.st-slider {
  appearance: none;
  width: 164px;
  height: 4px;
  margin: 0 8px;
  background: linear-gradient(90deg, #9c1010 20%, #777 20%);
}

.st-slider::-webkit-slider-thumb {
  appearance: none;
  width: 24px;
  height: 24px;
  border: 6px solid #d4d4d4;
  border-radius: 50%;
  background: #a31212;
}

/* Remote desktop window */
.rdp {
  position: absolute;
  top: 0;
  left: 9px;
  right: 9px;
  bottom: 80px;
  display: flex;
  flex-direction: column;
  background: #f0f0f0;
  border-radius: 8px;
  overflow: hidden;
  box-shadow: 0 2px 10px rgba(0, 0, 0, 0.5);
}

.titlebar {
  height: 39px;
  flex: none;
  display: flex;
  align-items: center;
  gap: 5px;
  padding-left: 10px;
  background: #f3f2f6;
  border-bottom: 1px solid #3a3a42;
}

.app-icon {
  width: 20px;
  height: 20px;
}

.title-buttons {
  margin-left: auto;
  display: flex;
}

.title-buttons button {
  width: 59px;
  display: flex;
  justify-content: center;
}

.title-buttons svg,
.mdi-buttons svg {
  width: 14px;
  height: 14px;
  stroke: #222;
}

.rdp-body {
  flex: 1;
  display: flex;
  min-height: 0;
}

.rdp-view {
  flex: 1;
  min-width: 0;
  display: flex;
  flex-direction: column;
  border-top: 9px solid #9d9d9d;
  border-left: 7px solid #9d9d9d;
  border-right: 1px solid #fff;
  background: #fff;
}

.vscroll {
  width: 20px;
  padding: 20px 7px;
}

.vthumb {
  height: 100%;
  background: #868686;
}

.hscroll {
  height: 21px;
  display: flex;
  align-items: center;
  padding: 0 3px 0 6px;
}

.hthumb {
  flex: 1;
  height: 6px;
  margin: 0 44px 0 9px;
  background: #868686;
}

.arrow-left,
.arrow-right {
  border: 4px solid transparent;
}

.arrow-left {
  border-right: 6px solid #d2d2d2;
  border-left: 0;
}

.arrow-right {
  border-left: 6px solid #d2d2d2;
  border-right: 0;
}

.grip {
  width: 12px;
  height: 12px;
  margin-left: 15px;
  align-self: flex-end;
  fill: #c4c4c4;
}

/* Menu and toolbar */
.menubar {
  height: 39px;
  flex: none;
  display: flex;
  align-items: center;
  gap: 18px;
  padding: 0 7px 4px 25px;
  border-bottom: 1px solid #dcdcdc;
  font-family: "Open Sans", sans-serif;
  color: #444;
}

.mdi-buttons {
  margin-left: auto;
  display: flex;
  gap: 11px;
}

.toolbar {
  height: 59px;
  flex: none;
  display: flex;
  align-items: center;
  padding: 7px 305px 0 13px;
  background: #fdfdfd;
  border-bottom: 2px solid #c2c2c2;
  color: #686868;
}

/* groups share one row so that every button gets the same width */
.tool-group {
  display: contents;
}

.tool-group button {
  flex: 1;
  display: flex;
  justify-content: center;
}

.tool-group + .tool-group button:first-child {
  margin-left: 11px;
}

.tool-group svg {
  flex: none;
  width: 26px;
  height: 26px;
  overflow: visible;
  stroke: currentColor;
  stroke-width: 2;
}

.tool-group .solid,
.tool-group text {
  fill: currentColor;
  stroke: none;
}

.tool-group text {
  font: 9px "Liberation Sans", sans-serif;
  text-anchor: middle;
}

.tool-group .big {
  font-size: 12px;
}

.tool-group .help {
  font-size: 17px;
}

.tool-group .mid {
  color: #bababa;
}

.tool-group button:disabled {
  color: #d0d0d0;
}

/* Workspace */
.workspace {
  position: relative;
  flex: 1;
  min-height: 0;
  display: flex;
  font-family: "Liberation Sans", Arial, sans-serif;
}

.sidebar {
  width: 366px;
  display: flex;
  flex-direction: column;
  border-left: 3px solid #b4b4b4;
  border-right: 1px solid #a9b8bc;
  background: linear-gradient(#fff 12%, #fafbff 15%, #e2f6fe 42%, #d2f1fd 60%, #b8eaff 80%);
  font-size: 16px;
}

.side-tabs {
  display: flex;
  padding-right: 2px;
}

.side-tab {
  flex: 1;
  height: 37px;
  background: #dcdcdc;
}

.side-tab.active {
  background: #fff;
  color: #1a86ea;
}

.lookup {
  display: flex;
  gap: 1px;
  height: 50px;
  margin: 9px 4px 0 0;
}

.wrench,
.lookup-box {
  border: 1px solid #adadad;
  border-width: 1px 2px 2px;
  background: #f2f4f5;
}

.wrench {
  width: 51px;
  border-left: none;
  padding: 10px 11px;
}

.wrench svg {
  width: 26px;
  height: 26px;
}

.lookup-box {
  flex: 1;
  display: flex;
  align-items: center;
  padding: 0 4px 0 10px;
}

.lookup-box input {
  flex: 1;
  min-width: 0;
  padding: 0;
  border: none;
  background: none;
  font: 17px "Liberation Sans", Arial, sans-serif;
}

.lookup-box input::placeholder {
  color: #999;
  opacity: 1;
}

.lookup-box svg {
  width: 28px;
  height: 28px;
  stroke: #8b8b8b;
}

.tree-wrap {
  flex: 1;
  min-height: 0;
  display: flex;
  padding: 2px 5px 0 7px;
}

.tree {
  flex: 1;
  min-width: 0;
  margin: 0;
  padding: 0;
  overflow: hidden;
  list-style: none;
}

.tree a {
  display: flex;
  align-items: center;
  gap: 17px;
  height: 41px;
  padding-left: 22px;
  color: #8a8f91;
  font-size: 18px;
  text-decoration: none;
  white-space: nowrap;
}

.tree .folder a {
  height: 42px;
}

.tree .lvl2 a {
  padding-left: 42px;
}

.tree .lvl3 a {
  padding-left: 62px;
}

.tree svg {
  width: 20px;
  height: 16px;
  flex: none;
  stroke: #3bb3e0;
}

.dash {
  flex: none;
  width: 10px;
  height: 3px;
  margin: 0 5px;
  background: #33acd9;
}

.tree .selected a {
  height: 38px;
  margin: 1px 0 2px;
  background: #2290cf;
  color: #fff;
}

.selected .dash {
  background: #f0826a;
}

.tree-scroll {
  width: 10px;
  padding-top: 235px;
}

.tree-thumb {
  height: 396px;
  border-radius: 5px;
  background: #b6b9bd;
}

/* Cockpit */
.cockpit {
  flex: 1;
  min-width: 0;
  display: flex;
  flex-direction: column;
  overflow: hidden;
  background: linear-gradient(115deg, #bfeaf8, #bfebe8 50%, #c0ebdf);
}

.cockpit-head {
  height: 73px;
  flex: none;
  display: grid;
  grid-template-columns: 1fr auto 1fr;
  align-items: center;
  padding: 6px 4px 0 26px;
  font-size: 18px;
  color: #404040;
}

.cockpit-head p {
  margin: 0 0 5px 8px;
}

.cockpit-head a {
  color: #189018;
}

.cockpit-actions {
  display: flex;
  justify-content: flex-end;
  gap: 68px;
}

.cockpit-head svg {
  width: 28px;
  height: 28px;
  overflow: visible;
  stroke: #555;
  stroke-width: 2;
}

.cards {
  display: grid;
  grid-template-columns: 1fr 1fr;
  grid-template-rows: 262px 262px 187px;
  gap: 25px;
  padding: 24px 75px 0 88px;
}

.card {
  background: #fff;
  border-radius: 8px;
  overflow: hidden;
}

.card-line {
  grid-row: 2 / 4;
}

.chart {
  width: 100%;
  font-size: 15px;
}

.chart text {
  fill: #444;
}

.chart .faint {
  fill: #999;
}

.chart .chart-title {
  font-size: 18px;
  font-weight: bold;
  text-anchor: end;
}

.chart .end-text {
  text-anchor: end;
}

.mid-text {
  text-anchor: middle;
}

.grid {
  stroke: #e2e2e2;
  stroke-width: 2;
}

.thin {
  stroke: #d4d4d4;
  stroke-width: 1;
}

.axis {
  stroke: #444;
  stroke-width: 1;
}

.bars {
  fill: #5cbae6;
}

.line-a path {
  stroke: #5cbae6;
  stroke-width: 3;
}

.line-a circle {
  fill: #5cbae6;
}

.line-b path {
  stroke: #b6d957;
  stroke-width: 3;
}

.line-b circle {
  fill: #b6d957;
}

/* Dialog window, floats over the cockpit */
.dialog {
  position: absolute;
  top: 70px;
  left: 387px;
  width: 920px;
  padding: 0 15px 16px 14px;
  background: #fff;
  border: 2px solid #bfc4c4;
  border-top: 4px solid #009de6;
  font-family: "DejaVu Sans Condensed", "DejaVu Sans", sans-serif;
  font-size: 12px;
  color: #222;
}

.dialog-head {
  height: 33px;
  display: flex;
  align-items: center;
  gap: 14px;
  margin: 0 -10px 7px -10px;
  padding: 0 10px 3px;
  border-bottom: 1px solid #c4c4c4;
}

.dialog-head h2 {
  flex: 1;
  margin: 0;
  font: 17px "Noto Sans", sans-serif;
  color: #333;
}

.dialog-head svg {
  width: 14px;
  height: 14px;
  stroke: #444;
}

.dialog-form {
  display: flex;
  justify-content: space-between;
}

.fields {
  display: flex;
  flex-direction: column;
  gap: 2px;
}

.row {
  display: flex;
  align-items: center;
  gap: 2px;
  height: 18px;
}

.dialog input:not([type="checkbox"]),
.dialog select,
.dialog textarea {
  height: 18px;
  padding: 0 2px;
  border: 1px solid #b9b9b9;
  border-radius: 2px;
  background: #fff;
  font: inherit;
  color: inherit;
}

.dialog input[readonly] {
  background: #e6e6e6;
}

.drop {
  position: relative;
  display: block;
}

.drop select {
  appearance: none;
  display: block;
  width: 100%;
}

.drop::after {
  content: "";
  position: absolute;
  top: 5px;
  right: 3px;
  border: 5px solid transparent;
  border-top: 6px solid #333;
  border-bottom: 0;
  pointer-events: none;
}

.lbl-main {
  width: 169px;
  padding-left: 2px;
  font-size: 13px;
}

.lbl-time {
  width: 62px;
  padding-left: 5px;
}

.lbl-doc {
  width: 101px;
  padding-left: 1px;
}

.lbl-wide {
  width: 199px;
  padding-left: 1px;
}

.w-long {
  width: 175px;
}

.w-time {
  width: 77px;
}

.w-user {
  width: 81px;
}

.w-code {
  width: 92px;
}

.w-series {
  width: 96px;
}

.doc-tab {
  display: block;
  width: 84px;
  height: 22px;
  margin: 36px 0 -1px 12px;
  padding-left: 8px;
  position: relative;
  background: #fff;
  border: 1px solid #c2c2c2;
  border-bottom: none;
}

.doc-panel {
  padding: 8px 6px 23px;
  border: 1px solid #cfcfcf;
}

.find-row {
  display: flex;
  align-items: center;
  gap: 3px;
  margin-bottom: 7px;
}

.find-lbl {
  width: 71px;
  padding-left: 1px;
}

.find-item {
  width: 103px;
}

.w-find {
  width: 154px;
}

.w-whse {
  width: 118px;
}

.nav-btn {
  width: 25px;
  height: 18px;
  margin-left: 2px;
  background: #dcdcdc;
  color: #fff;
}

.grid-wrap {
  display: flex;
  align-items: flex-start;
}

.grid-table {
  flex: none;
  width: 853px;
  table-layout: fixed;
  border-collapse: collapse;
}

.c-num { width: 25px; }
.c-item { width: 83px; }
.c-desc { width: 114px; }
.c-freeze { width: 50px; }
.c-whse { width: 62px; }
.c-inqty { width: 101px; }
.c-counted { width: 61px; }
.c-uom { width: 119px; }
.c-cqty { width: 122px; }
.c-var { width: 94px; }
.c-u { width: 22px; }

.grid-table th {
  height: 23px;
  padding: 0 0 2px 5px;
  background: #e6e6e6;
  border: 1px solid #cdcdcd;
  font-weight: normal;
  text-align: left;
  white-space: nowrap;
  color: #444;
}

.grid-table td {
  height: 20px;
  padding: 0 5px;
  border: 1px solid #cdcdcd;
  line-height: 16px;
}

.grid-table tbody td:first-child,
.grid-table tbody td:nth-child(6),
.grid-table tbody td:nth-child(10),
.grid-table .total {
  background: #e6e6e6;
}

.grid-table b,
.num {
  font-size: 11px;
  font-weight: bold;
  color: #444;
}

.num {
  text-align: right;
}

.grid-table .editing {
  background: #eaf4ff;
}

.edit-cell {
  display: flex;
  align-items: center;
  justify-content: space-between;
  margin-right: -3px;
  padding-left: 20px;
}

.caret {
  width: 1px;
  height: 15px;
  background: #000;
}

.edit-cell svg {
  width: 13px;
  height: 13px;
  stroke: #a8b4c4;
}

.grid-table .check {
  padding: 0 2px 0 0;
}

.check input {
  appearance: none;
  display: block;
  width: 15px;
  height: 15px;
  margin: 0 auto;
  border: 1px solid #858a8e;
  background: #fff;
}

.grid-table tfoot td {
  height: 24px;
  border: none;
}

.grid-table tfoot .total {
  border: 1px solid #cdcdcd;
}

.expand {
  width: 17px;
  height: 17px;
  margin-top: -2px;
  border: 1px solid #c9dcef;
}

.expand svg {
  stroke: #8fabcf;
  stroke-width: 2;
}

.grid-scroll {
  width: 652px;
  height: 8px;
  margin: 7px 0 0 45px;
  border-radius: 4px;
  background: #dcdcdc;
}

.remarks {
  display: flex;
  margin-top: 12px;
}

.remarks label {
  width: 127px;
  padding: 2px 0 0 3px;
}

.dialog .remarks textarea {
  width: 349px;
  height: 64px;
  resize: none;
}

.dialog-buttons {
  display: flex;
  gap: 7px;
  margin: 13px 0 0;
}

.dialog-buttons button {
  position: relative;
  height: 25px;
  padding-bottom: 2px;
  background: #777;
  color: #fff;
}

.dialog-buttons .primary {
  width: 81px;
  background: #009de6;
}

.dialog-buttons .cancel {
  width: 80px;
  margin-right: 6px;
}

.dialog-buttons .add-items {
  width: 136px;
  padding-right: 12px;
}

.dialog-buttons .adjust {
  width: 330px;
  padding-right: 12px;
}

.dialog-buttons .copy {
  width: 222px;
  background: #dcdcdc;
}

.more::after {
  content: "";
  position: absolute;
  right: 5px;
  bottom: 6px;
  border-left: 6px solid transparent;
  border-bottom: 6px solid #fff;
}

/* Taskbar */
.taskbar {
  height: 59px;
  flex: none;
  display: flex;
  align-items: center;
  background: #222024;
  color: #fff;
}

.weather {
  width: 340px;
  display: flex;
  align-items: center;
  gap: 9px;
  padding-left: 24px;
  text-align: left;
}

.weather svg {
  width: 32px;
  height: 32px;
}

.weather-text,
.clock {
  display: flex;
  flex-direction: column;
  line-height: 20px;
}

.weather-text {
  color: #ccc;
}

.temp {
  color: #fff;
}

.start {
  width: 30px;
  height: 30px;
  margin: 0 16px 0 25px;
}

.search {
  width: 274px;
  height: 39px;
  display: flex;
  align-items: center;
  gap: 12px;
  padding-left: 15px;
  border: 1px solid #47444a;
  border-radius: 20px;
  background: #3a383d;
  overflow: hidden;
}

.glass {
  width: 19px;
  height: 19px;
  flex: none;
  stroke: #ddd;
  stroke-width: 2;
}

.search input {
  flex: 1;
  min-width: 0;
  padding: 0;
  border: none;
  background: none;
  font: 16px "Noto Sans", sans-serif;
}

.search input::placeholder {
  color: #ddd;
  opacity: 1;
}

.island {
  width: 71px;
  height: 30px;
  flex: none;
  align-self: flex-end;
}

.apps {
  display: flex;
  gap: 6px;
  margin-left: 6px;
}

.apps button {
  position: relative;
  width: 49px;
  height: 50px;
  display: flex;
  align-items: center;
  justify-content: center;
}

.apps svg {
  width: 30px;
  height: 30px;
}

.apps text {
  font: bold 13px "Open Sans", sans-serif;
  text-anchor: middle;
  fill: #fff;
}

.apps .open::after {
  content: "";
  position: absolute;
  bottom: 1px;
  width: 8px;
  height: 4px;
  border-radius: 2px;
  background: #9a989b;
}

.apps .current {
  background: #302e33;
  border: 1px solid #3c3a3f;
  border-radius: 4px;
}

.apps .current::after {
  bottom: 0;
  width: 20px;
  background: #f68368;
}

.badge {
  position: absolute;
  top: 4px;
  right: 0;
  width: 25px;
  height: 20px;
  border-radius: 10px;
  background: #f68368;
  color: #222;
  line-height: 20px;
}

.tray {
  margin-left: auto;
  display: flex;
  gap: 11px;
}

.tray svg {
  width: 20px;
  height: 20px;
  stroke: #fff;
  stroke-width: 2;
}

.tray svg:first-child {
  margin-right: 8px;
}

.clock {
  margin-left: 21px;
  text-align: right;
}

.notify {
  width: 20px;
  height: 20px;
  margin: 0 25px 0 15px;
  border-radius: 50%;
  background: #f68368;
  color: #222;
  font-size: 13px;
  line-height: 20px;
  text-align: center;
}
```
